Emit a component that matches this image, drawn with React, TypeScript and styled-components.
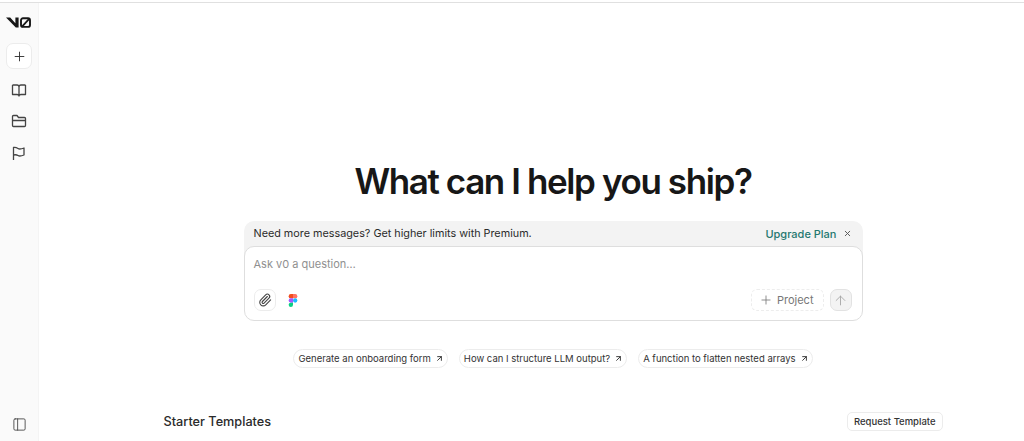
import styled, { createGlobalStyle } from "styled-components";
import { ArrowUp, ArrowUpRight, Paperclip, PanelLeft, Plus, X } from "lucide-react";

const GlobalStyle = createGlobalStyle`
	html, body {
		margin: 0;
		height: 100%;
		overflow: hidden;
		background: #fff;
		font-family: Inter, "Liberation Sans", sans-serif;
		color: #171717;
	}
`;

const Page = styled.div`
	display: flex;
	height: 439px;
	margin-top: 2px;
	border-top: 1px solid #e0e0e0;
	box-sizing: border-box;
`;

const Sidebar = styled.aside`
	flex: 0 0 39px;
	display: flex;
	flex-direction: column;
	align-items: center;
	box-sizing: border-box;
	padding: 14px 0 1px;
	background: #fafafa;
	border-right: 1px solid #f4f4f4;
`;

const Logo = styled.svg`
	width: 25px;
	height: 11px;
	margin: 0 2px 15px 0;
	color: #171717;
`;

const NewButton = styled.button`
	width: 26px;
	height: 26px;
	padding: 0;
	margin-bottom: 5px;
	display: flex;
	align-items: center;
	justify-content: center;
	background: #fff;
	border: 1px solid #ececec;
	border-radius: 7px;
	color: #333;
`;

const NavIcon = styled.span`
	width: 26px;
	height: 31.5px;
	display: flex;
	align-items: center;
	justify-content: center;
	color: #444;
`;

const Spacer = styled.div`
	flex: 1;
`;

const Main = styled.main`
	flex: 1;
	display: flex;
	flex-direction: column;
	align-items: center;
	padding: 155px 0 0 43px;
	box-sizing: border-box;
	min-width: 0;
`;

const Heading = styled.h1`
	margin: 0 0 17px;
	font-size: 35px;
	line-height: 46px;
	font-weight: 600;
	letter-spacing: -1.4px;
	color: #171717;
`;

const Prompt = styled.div`
	width: 619px;
`;

const Banner = styled.div`
	display: flex;
	align-items: center;
	justify-content: space-between;
	height: 36px;
	box-sizing: border-box;
	padding: 0 11px 11px 10px;
	margin-bottom: -11px;
	background: #f3f3f3;
	border-radius: 10px 10px 0 0;
	font-size: 10.8px;
	color: #2b2b2b;
`;

const BannerActions = styled.div`
	display: flex;
	align-items: center;
	gap: 6px;
	color: #555;
`;

const UpgradeLink = styled.a`
	font-size: 11px;
	font-weight: 500;
	color: #25786f;
`;

const InputCard = styled.div`
	position: relative;
	height: 75px;
	box-sizing: border-box;
	padding: 10px 9px 9px;
	display: flex;
	flex-direction: column;
	justify-content: space-between;
	background: #fff;
	border: 1px solid #dedede;
	border-radius: 10px;
`;

const Placeholder = styled.div`
	font-size: 11px;
	line-height: 14px;
	color: #8f8f8f;
`;

const Toolbar = styled.div`
	display: flex;
	align-items: center;
	gap: 12px;
`;

const AttachButton = styled.button`
	width: 22px;
	height: 22px;
	padding: 0;
	display: flex;
	align-items: center;
	justify-content: center;
	background: #fff;
	border: 1px solid #ececec;
	border-radius: 7px;
	color: #444;
`;

const ToolbarEnd = styled.div`
	margin-left: auto;
	margin-right: 1px;
	display: flex;
	align-items: center;
	gap: 6px;
`;

const ProjectButton = styled.div`
	display: flex;
	align-items: center;
	gap: 4px;
	height: 22px;
	box-sizing: border-box;
	padding: 0 9px 0 7px;
	border: 1px dashed #ededed;
	border-radius: 6px;
	font-size: 11px;
	color: #777;
`;

const SendButton = styled.button`
	width: 22px;
	height: 22px;
	padding: 0;
	display: flex;
	align-items: center;
	justify-content: center;
	background: #f3f3f3;
	border: 1px solid #e2e2e2;
	border-radius: 7px;
	color: #a3a3a3;
`;

const Suggestions = styled.div`
	display: flex;
	gap: 11px;
	margin-top: 28px;
`;

const Chip = styled.div`
	display: flex;
	align-items: center;
	gap: 4px;
	height: 19px;
	box-sizing: border-box;
	padding: 0 3px 0 4px;
	border: 1px solid #ececec;
	border-radius: 10px;
	font-size: 9.5px;
	color: #333;
	white-space: nowrap;
`;

const TemplatesHeader = styled.div`
	width: 779px;
	display: flex;
	align-items: center;
	justify-content: space-between;
	margin-top: 44px;
`;

const TemplatesTitle = styled.div`
	font-size: 12.7px;
	font-weight: 500;
	color: #2a2a2a;
`;

const RequestButton = styled.button`
	height: 19px;
	padding: 0 6px;
	background: #fff;
	border: 1px solid #ececec;
	border-radius: 5px;
	font-family: inherit;
	font-size: 9.5px;
	font-weight: 500;
	color: #333;
`;

const suggestions = [
	"Generate an onboarding form",
	"How can I structure LLM output?",
	"A function to flatten nested arrays",
];

const navIcons = [
	// book
	"M1.5 3H6a2 2 0 0 1 2 2v9M14.5 3H10a2 2 0 0 0-2 2M1.5 3v9.5H6c1 0 2 .5 2 1.5c0-1 1-1.5 2-1.5h4.5V3",
	// folder
	"M1.5 3.5a1 1 0 0 1 1-1h3.5l1.5 2h6a1 1 0 0 1 1 1v7a1 1 0 0 1-1 1h-11a1 1 0 0 1-1-1zM1.5 7.5h13",
	// flag
	"M2.5 15V2.5c2-.5 3 0 4.5 1s3.5.5 6-.5v7c-2.5 1-4.5 1.5-6 .5s-2.5-1-4.5-.5",
];

function NavGlyph({ d }: { d: string }) {
	return (
		<svg width="16" height="16" viewBox="0 0 16 16" fill="none" stroke="currentColor" strokeWidth="1.3" strokeLinejoin="round">
			<path d={d} />
		</svg>
	);
}

function FigmaMark() {
	return (
		<svg width="10" height="13" viewBox="0 0 10 15">
			<path d="M2.5 0H5v5H2.5a2.5 2.5 0 0 1 0-5z" fill="#f24e1e" />
			<path d="M5 0h2.5a2.5 2.5 0 0 1 0 5H5z" fill="#ff7262" />
			<path d="M2.5 5H5v5H2.5a2.5 2.5 0 0 1 0-5z" fill="#a259ff" />
			<circle cx="7.5" cy="7.5" r="2.5" fill="#1abcfe" />
			<path d="M2.5 10H5v2.5a2.5 2.5 0 1 1-2.5-2.5z" fill="#0acf83" />
		</svg>
	);
}

function App() {
	return (
		<>
			<GlobalStyle />
			<Page>
				<Sidebar>
					<Logo viewBox="0 0 25 11">
						<path fill="currentColor" d="M0 .6h4.2l5.2 5.6V.6h3.2v10H9.8z" />
						<rect x="15" y="1.3" width="9" height="8.6" rx="2" fill="none" stroke="currentColor" strokeWidth="1.9" />
						<path d="M15.8 9.8 23.6 1.4" stroke="currentColor" strokeWidth="1.8" />
					</Logo>
					<NewButton><Plus size={15} strokeWidth={1.5} /></NewButton>
					{navIcons.map((d) => (
						<NavIcon key={d}><NavGlyph d={d} /></NavIcon>
					))}
					<Spacer />
					<NavIcon><PanelLeft size={15} strokeWidth={1.4} /></NavIcon>
				</Sidebar>
				<Main>
					<Heading>What can I help you ship?</Heading>
					<Prompt>
						<Banner>
							<span>Need more messages? Get higher limits with Premium.</span>
							<BannerActions>
								<UpgradeLink>Upgrade Plan</UpgradeLink>
								<X size={9} strokeWidth={2.5} />
							</BannerActions>
						</Banner>
						<InputCard>
							<Placeholder>Ask v0 a question…</Placeholder>
							<Toolbar>
								<AttachButton><Paperclip size={14} strokeWidth={1.9} /></AttachButton>
								<FigmaMark />
								<ToolbarEnd>
									<ProjectButton><Plus size={14} strokeWidth={1.4} />Project</ProjectButton>
									<SendButton><ArrowUp size={15} strokeWidth={1.4} /></SendButton>
								</ToolbarEnd>
							</Toolbar>
						</InputCard>
					</Prompt>
					<Suggestions>
						{suggestions.map((text) => (
							<Chip key={text}>
								{text}
								<ArrowUpRight size={9} strokeWidth={2.5} />
							</Chip>
						))}
					</Suggestions>
					<TemplatesHeader>
						<TemplatesTitle>Starter Templates</TemplatesTitle>
						<RequestButton>Request Template</RequestButton>
					</TemplatesHeader>
				</Main>
			</Page>
		</>
	);
}

export default App;
